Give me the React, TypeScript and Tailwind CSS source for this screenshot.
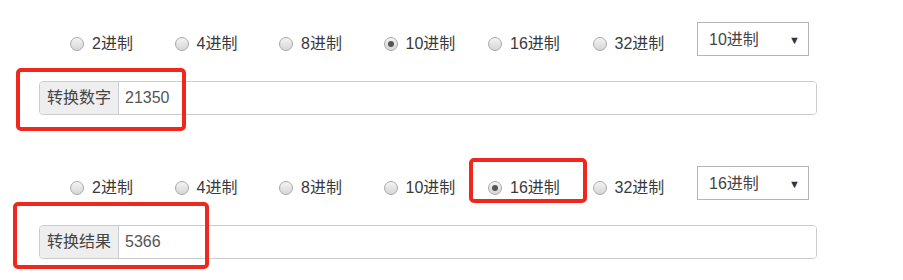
import { useState } from 'react'

const bases = ['2进制', '4进制', '8进制', '10进制', '16进制', '32进制']

const font = { fontFamily: '"Liberation Sans", Arial, "Noto Sans CJK SC", sans-serif' }

function Radio({ label, checked }: { label: string; checked: boolean }) {
  return (
    <label className="flex w-[104.5px] shrink-0 items-center gap-2 text-[16px] leading-none text-[#3a3a3a]">
      <span className="flex h-[14px] w-[14px] items-center justify-center rounded-full border border-[#a9a9a9] bg-gradient-to-b from-[#f4f4f4] to-[#d6d6d6]">
        {checked && <span className="h-[6px] w-[6px] rounded-full bg-[#555]" />}
      </span>
      <span>{label}</span>
    </label>
  )
}

function BaseRow({ value }: { value: string }) {
  return (
    <div className="flex items-start pl-[70px]">
      <div className="mt-[14px] flex">
        {bases.map((b) => (
          <Radio key={b} label={b} checked={b === value} />
        ))}
      </div>
      <div className="flex h-[34px] w-[112px] items-center justify-between border border-[#b5b5b5] bg-white pl-[11px] pr-[8px] pt-[2px] text-[16px] text-[#444]">
        <span>{value}</span>
        <span className="text-[11px] text-[#333]">▼</span>
      </div>
    </div>
  )
}

function InputGroup({ label, value }: { label: string; value: string }) {
  return (
    <div className="ml-[39px] flex h-[34px] w-[778px] overflow-hidden rounded-[4px] border border-[#ccc] text-[16px]">
      <span className="flex w-[79px] items-center justify-center border-r border-[#ccc] bg-[#eee] text-[#444]">
        {label}
      </span>
      <span className="flex flex-1 items-center bg-white pl-[6px] text-[#555]">{value}</span>
    </div>
  )
}

export default function App() {
  const [input] = useState('21350')
  return (
    <div className="relative h-[280px] w-[903px] overflow-hidden bg-white" style={font}>
      <div className="pt-[22px]">
        <BaseRow value="10进制" />
        <div className="mt-[25px]">
          <InputGroup label="转换数字" value={input} />
        </div>
      </div>
      <div className="mt-[51px]">
        <BaseRow value="16进制" />
        <div className="mt-[25px]">
          <InputGroup label="转换结果" value="5366" />
        </div>
      </div>

      {/* annotation boxes */}
      <div className="absolute left-[16px] top-[68px] h-[63px] w-[170px] rounded-[5px] border-[4px] border-[#f0271d]" />
      <div className="absolute left-[13px] top-[202px] h-[67px] w-[196px] rounded-[5px] border-[4px] border-[#f0271d]" />
      <div className="absolute left-[469px] top-[158px] h-[45px] w-[118px] rounded-[5px] border-[4px] border-[#f0271d]" />
    </div>
  )
}
